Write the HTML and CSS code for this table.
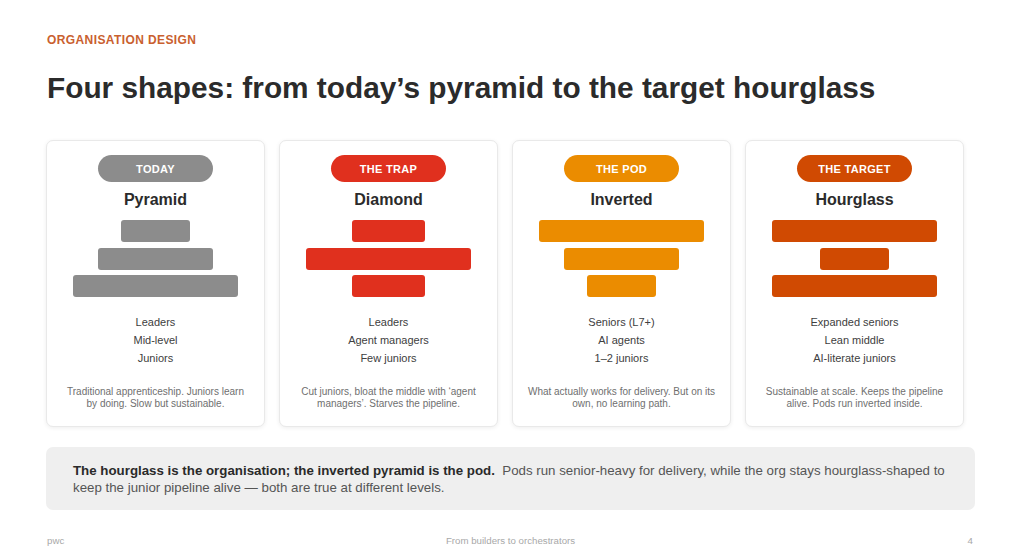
FILE: index.html
```html
<!DOCTYPE html>
<html lang="en">
<head>
<meta charset="utf-8">
<title>Four shapes</title>
<link rel="stylesheet" href="styles.css">
</head>
<body>
<main class="slide">
  <header class="head">
    <div class="eyebrow">ORGANISATION DESIGN</div>
    <h1 class="title">Four shapes: from today’s pyramid to the target hourglass</h1>
  </header>

  <section class="cards">
    <article class="card card-today">
      <div class="pill">TODAY</div>
      <h2 class="shape-name">Pyramid</h2>
      <div class="bars">
        <div class="bar" style="width:69px"></div>
        <div class="bar" style="width:115px"></div>
        <div class="bar" style="width:165px"></div>
      </div>
      <ul class="levels">
        <li>Leaders</li>
        <li>Mid-level</li>
        <li>Juniors</li>
      </ul>
      <p class="desc">Traditional apprenticeship. Juniors learn by doing. Slow but sustainable.</p>
    </article>

    <article class="card card-trap">
      <div class="pill">THE TRAP</div>
      <h2 class="shape-name">Diamond</h2>
      <div class="bars">
        <div class="bar" style="width:73px"></div>
        <div class="bar" style="width:165px"></div>
        <div class="bar" style="width:73px"></div>
      </div>
      <ul class="levels">
        <li>Leaders</li>
        <li>Agent managers</li>
        <li>Few juniors</li>
      </ul>
      <p class="desc">Cut juniors, bloat the middle with ‘agent managers’. Starves the pipeline.</p>
    </article>

    <article class="card card-pod">
      <div class="pill">THE POD</div>
      <h2 class="shape-name">Inverted</h2>
      <div class="bars">
        <div class="bar" style="width:165px"></div>
        <div class="bar" style="width:115px"></div>
        <div class="bar" style="width:69px"></div>
      </div>
      <ul class="levels">
        <li>Seniors (L7+)</li>
        <li>AI agents</li>
        <li>1–2 juniors</li>
      </ul>
      <p class="desc">What actually works for delivery. But on its own, no learning path.</p>
    </article>

    <article class="card card-target">
      <div class="pill">THE TARGET</div>
      <h2 class="shape-name">Hourglass</h2>
      <div class="bars">
        <div class="bar" style="width:165px"></div>
        <div class="bar" style="width:69px"></div>
        <div class="bar" style="width:165px"></div>
      </div>
      <ul class="levels">
        <li>Expanded seniors</li>
        <li>Lean middle</li>
        <li>AI-literate juniors</li>
      </ul>
      <p class="desc">Sustainable at scale. Keeps the pipeline alive. Pods run inverted inside.</p>
    </article>
  </section>

  <section class="callout">
    <p class="callout-text"><strong class="callout-lead">The hourglass is the organisation; the inverted pyramid is the pod.</strong>&nbsp; <span class="callout-body">Pods run senior-heavy for delivery, while the org stays hourglass-shaped to keep the junior pipeline alive — both are true at different levels.</span></p>
  </section>

  <footer class="foot">
    <span class="foot-brand">pwc</span>
    <span class="foot-center">From builders to orchestrators</span>
    <span class="foot-page">4</span>
  </footer>
</main>
</body>
</html>
```

FILE: styles.css
```css
* { box-sizing: border-box; }

html, body {
  margin: 0;
  padding: 0;
  background: #ffffff;
}

body {
  font-family: "Liberation Sans", Arial, sans-serif;
  color: #2d2d2d;
}

.slide {
  width: 1024px;
  height: 555px;
  padding: 33px 0 0 46px;
  overflow: hidden;
}

.eyebrow {
  font-size: 12px;
  line-height: 14px;
  font-weight: 700;
  letter-spacing: 0.4px;
  color: #c9602f;
  padding-left: 1px;
}

.title {
  margin: 24px 0 0 0;
  font-size: 29.8px;
  line-height: 34px;
  font-weight: 700;
  color: #2b2b2b;
  padding-left: 1px;
}

.cards {
  margin-top: 35px;
  width: 918px;
  display: grid;
  grid-template-columns: repeat(4, 1fr);
  gap: 14px;
}

.card {
  height: 287px;
  background: #ffffff;
  border: 1px solid #e9e9e9;
  border-radius: 7px;
  box-shadow: 0 1px 4px rgba(0, 0, 0, 0.07);
  padding-top: 14px;
  display: flex;
  flex-direction: column;
  align-items: center;
}

.pill {
  width: 115px;
  height: 27px;
  border-radius: 14px;
  color: #ffffff;
  font-size: 11px;
  font-weight: 700;
  letter-spacing: 0.3px;
  display: flex;
  align-items: center;
  justify-content: center;
}

.shape-name {
  margin: 8px 0 0 0;
  font-size: 16px;
  line-height: 20px;
  font-weight: 700;
  color: #2b2b2b;
}

.bars {
  margin-top: 10px;
  display: flex;
  flex-direction: column;
  align-items: center;
  gap: 5.5px;
}

.bar {
  height: 22px;
  border-radius: 3px;
}

.levels {
  list-style: none;
  margin: 16px 0 0 0;
  padding: 0;
  text-align: center;
  font-size: 11px;
  line-height: 18px;
  color: #404040;
}

.desc {
  margin: 19px 0 0 0;
  padding: 0 14px;
  text-align: center;
  font-size: 10px;
  line-height: 11.5px;
  color: #6f6f6f;
}

.card-today .pill, .card-today .bar { background: #8c8c8c; }
.card-trap .pill, .card-trap .bar { background: #e0301e; }
.card-pod .pill, .card-pod .bar { background: #eb8c00; }
.card-target .pill, .card-target .bar { background: #d04a02; }

.callout {
  margin-top: 20px;
  width: 929px;
  background: #efefef;
  border-radius: 7px;
  padding: 16px 27px 14px 27px;
}

.callout-text {
  margin: 0;
  font-size: 13.3px;
  line-height: 16.7px;
  color: #555555;
}

.callout-lead {
  color: #2a2a2a;
  font-weight: 700;
}

.callout-body {
  color: #555555;
}

.foot {
  margin-top: 25px;
  width: 929px;
  display: grid;
  grid-template-columns: 1fr auto 1fr;
  font-size: 9.7px;
  line-height: 12px;
  color: #a8a8a8;
}

.foot-brand { padding-left: 1px; }
.foot-center { text-align: center; }
.foot-page { text-align: right; padding-right: 2px; }
```
